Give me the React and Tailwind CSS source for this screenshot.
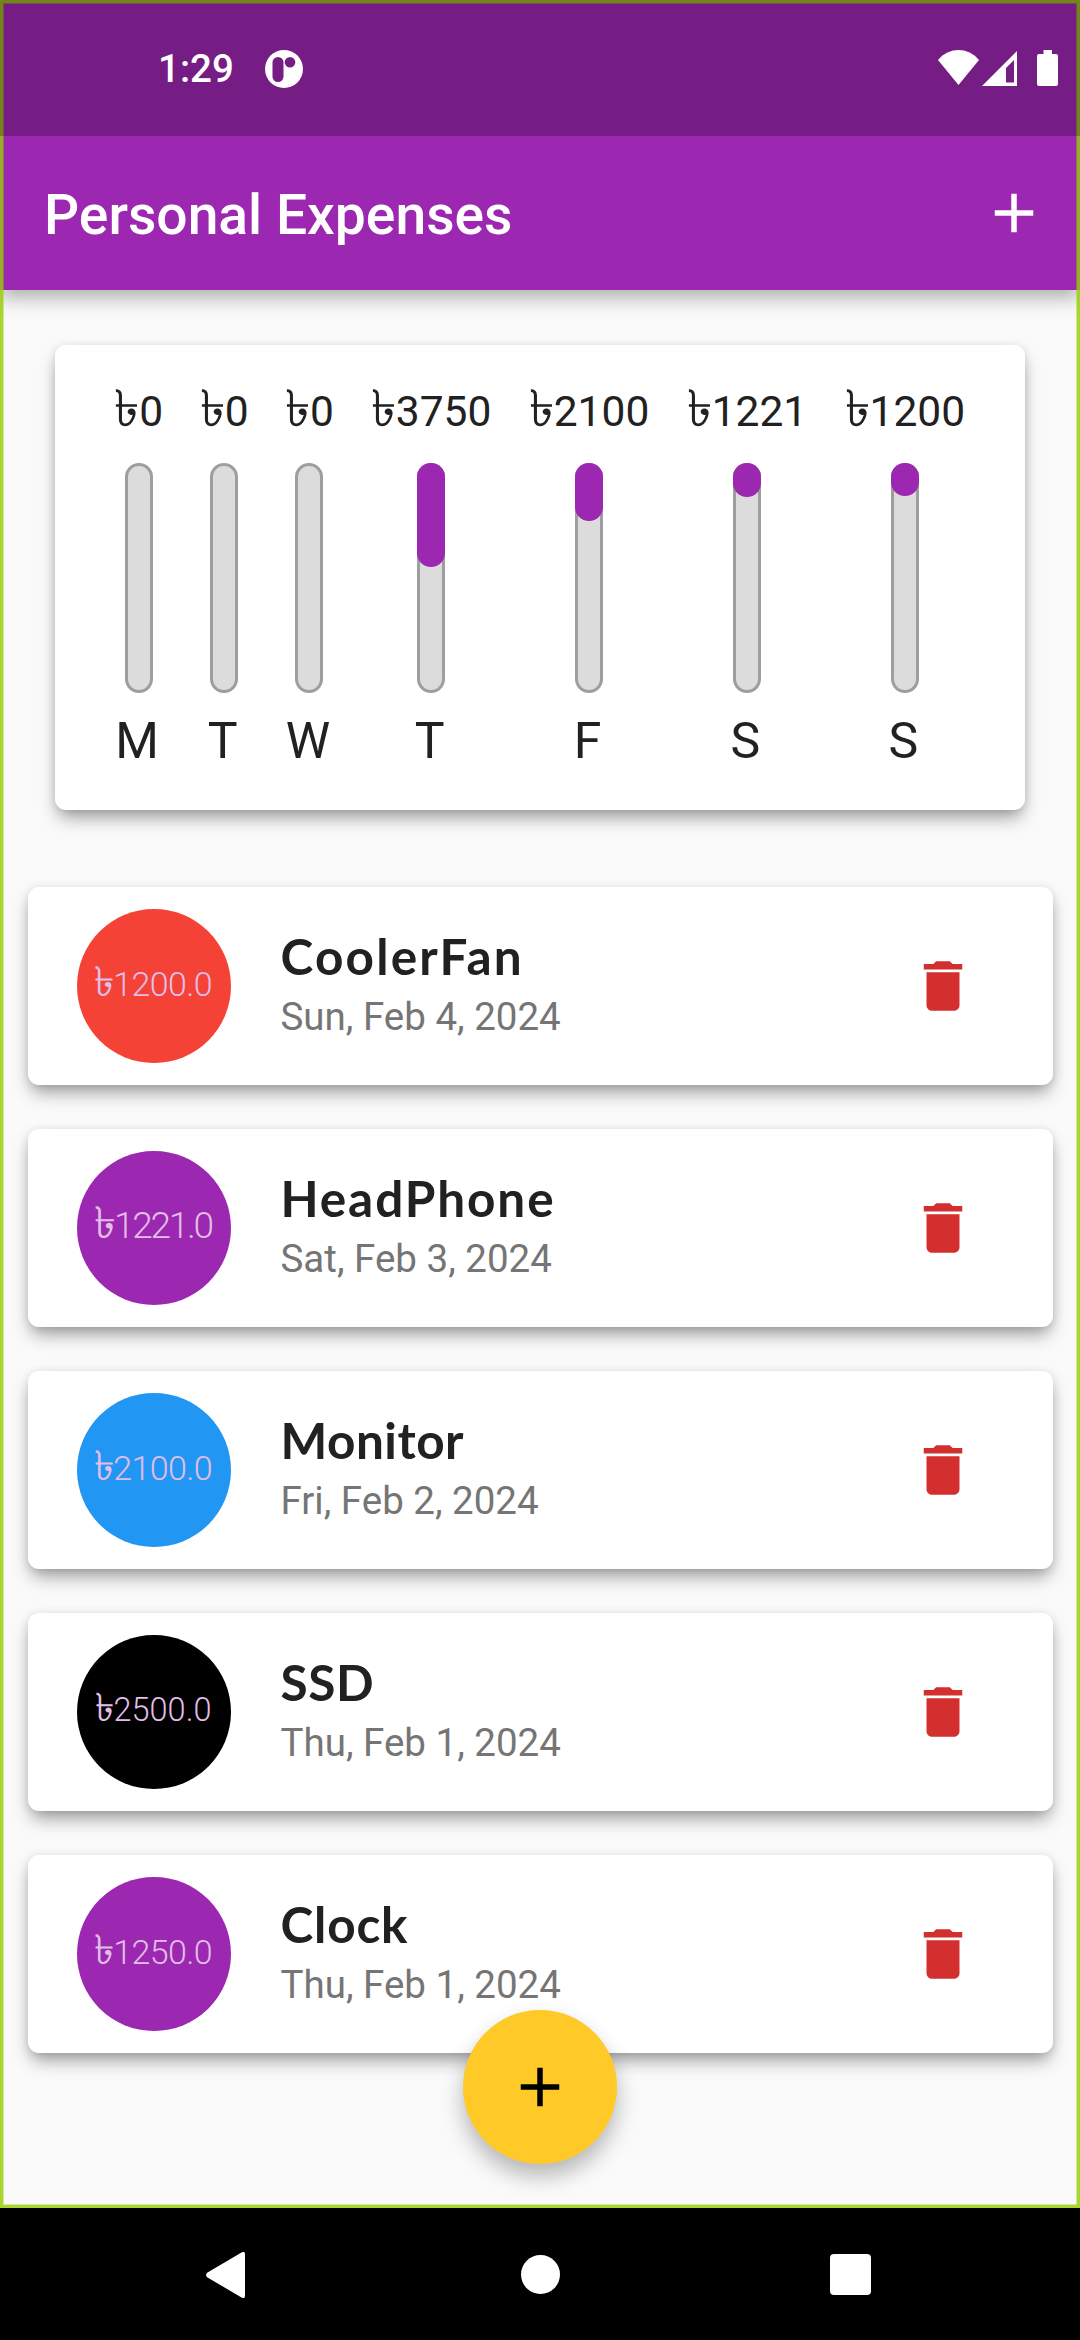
import React from "react";

const days = [
  { amount: 0, day: "M", fill: 0 },
  { amount: 0, day: "T", fill: 0 },
  { amount: 0, day: "W", fill: 0 },
  { amount: 3750, day: "T", fill: 104.3 },
  { amount: 2100, day: "F", fill: 58.3 },
  { amount: 1221, day: "S", fill: 34 },
  { amount: 1200, day: "S", fill: 33.3 },
];

const expenses = [
  { title: "CoolerFan", date: "Sun, Feb 4, 2024", amount: "1200.0", color: "bg-[#f44336]", size: "text-[34px] tracking-[-0.6px]", spacing: "tracking-[2.2px]" },
  { title: "HeadPhone", date: "Sat, Feb 3, 2024", amount: "1221.0", color: "bg-[#9c27b0]", size: "text-[37px] tracking-[-2.3px]", spacing: "tracking-[1.9px]" },
  { title: "Monitor", date: "Fri, Feb 2, 2024", amount: "2100.0", color: "bg-[#2196f3]", size: "text-[34px] tracking-[-0.6px]", spacing: "tracking-[0.5px]" },
  { title: "SSD", date: "Thu, Feb 1, 2024", amount: "2500.0", color: "bg-black", size: "text-[32.5px] tracking-[0px]", spacing: "tracking-[0.6px]" },
  { title: "Clock", date: "Thu, Feb 1, 2024", amount: "1250.0", color: "bg-[#9c27b0]", size: "text-[34px] tracking-[-0.6px]", spacing: "tracking-[0.8px]" },
];

const cardShadow = "shadow-[0_10px_18px_-3px_rgba(0,0,0,0.38),0_1px_10px_rgba(0,0,0,0.1)]";

function Taka() {
  return <span className="text-[1.2em] font-normal leading-none">৳</span>;
}

function Plus({ className }) {
  return (
    <svg viewBox="0 0 24 24" className={"size-[66px] fill-current " + className}>
      <path d="M19 13h-6v6h-2v-6H5v-2h6V5h2v6h6z" />
    </svg>
  );
}

function StatusBar() {
  return (
    <div className="flex h-[136px] items-center bg-[#751d84] pl-[158px] pr-[22px] text-white">
      <span className="pt-[3px] text-[38.5px] font-medium leading-none">1:29</span>
      <svg viewBox="0 0 38 38" className="ml-[31px] mt-[1px] size-[38px]">
        <circle cx="19" cy="19" r="19" fill="white" />
        <rect x="7.5" y="7" width="11" height="25" rx="5.500" fill="#751d84" />
        <circle cx="25" cy="12.2" r="5.3" fill="#751d84" />
      </svg>
      <svg viewBox="0 0 41 35" className="ml-auto mb-[1px] h-[35px] w-[41px] fill-white">
        <path d="M0 10C11-3.3 30-3.3 41 10L20.500 35z" />
      </svg>
      <svg viewBox="0 0 35 35" className="ml-[3px] h-[35px] w-[35px] fill-white">
        <path fillRule="evenodd" d="M35 0V35H0zM32 9L24 17V31.500H32z" />
      </svg>
      <svg viewBox="0 0 21 36" className="ml-5 h-9 w-[21px] fill-white">
        <path d="M6.500 0h8.500v4h4q2 0 2 2v28q0 2-2 2H2q-2 0-2-2V6q0-2 2-2h4.500z" />
      </svg>
    </div>
  );
}

function Chart() {
  return (
    <section className={"mx-[55px] mt-[55px] flex h-[465px] rounded-[11px] bg-white px-[41px] pt-[38px] text-[#212121] " + cardShadow}>
      {days.map((d, i) => (
        <div key={i} className={"flex flex-col items-center " + (d.amount ? "w-[157.9px]" : "w-[85.4px]")}>
          <div className="h-[46px] whitespace-nowrap text-[42.5px] leading-[46px]">
            <Taka />
            {d.amount}
          </div>
          <div className="mt-[34px] h-[230px] w-[28px] rounded-full border-3 border-[#9e9e9e] bg-[#dcdcdc]">
            {d.fill > 0 && (
              <div className="-m-[3px] rounded-full bg-[#9c27b0]" style={{ height: d.fill }} />
            )}
          </div>
          <div className="mt-[19px] pr-[3px] text-[50px] leading-[58px]">{d.day}</div>
        </div>
      ))}
    </section>
  );
}

function ExpenseCard({ item }) {
  return (
    <article className={"flex h-[198px] items-center rounded-[11px] bg-white pl-[49.500px] pr-[77px] " + cardShadow}>
      <div className={"flex size-[154px] shrink-0 items-center justify-center rounded-full " + item.color}>
        <span className={"whitespace-nowrap pb-1 pr-[2px] font-light text-[#e1bee7] " + item.size}>
          <Taka />
          {item.amount}
        </span>
      </div>
      <div className="ml-[49.500px] flex flex-col">
        <h2 className={"-mt-[4px] mb-[3px] font-['Lato'] text-[49.5px] font-bold leading-[62px] text-[#212121] " + item.spacing}>{item.title}</h2>
        <p className="text-[38.5px] leading-[54px] text-[#757575]">{item.date}</p>
      </div>
      <svg viewBox="0 0 24 24" className="ml-auto size-[66px] fill-[#d32f2f]">
        <path d="M6 19c0 1.100.9 2 2 2h8c1.100 0 2-.9 2-2V7H6v12zM19 4h-3.500l-1-1h-5l-1 1H5v2h14V4z" />
      </svg>
    </article>
  );
}

function NavBar() {
  return (
    <nav className="flex h-[132px] items-center bg-black pl-[206px] pr-[209px] pt-[1px]">
      <svg viewBox="0 0 39 46" className="h-[46px] w-[39px] fill-white">
        <path d="M35.500.6Q39-1.500 39 2.500V43.500Q39 47.500 35.500 45.400L1.500 25.500Q-1.500 23 1.500 20.500z" />
      </svg>
      <div className="ml-[276px] size-[39px] rounded-full bg-white" />
      <div className="ml-auto size-[41px] rounded-[4px] bg-white" />
    </nav>
  );
}

export default function App() {
  return (
    <div className="flex h-[2340px] w-[1080px] flex-col overflow-hidden bg-[#fafafa] font-['Roboto','Noto_Sans',sans-serif]">
      <div className="relative flex h-[2208px] flex-col">
        <header className="shadow-[0_8px_18px_rgba(0,0,0,0.3)]">
          <StatusBar />
          <div className="flex h-[154px] items-center justify-between bg-[#9c27b0] pl-[44px] pr-[33px] text-white">
            <h1 className="pt-[4px] text-[55.2px] font-medium">Personal Expenses</h1>
            <Plus className="text-white" />
          </div>
        </header>
        <Chart />
        <main className="mx-[27.500px] mt-[77px] flex flex-col gap-[44px]">
          {expenses.map((item) => (
            <ExpenseCard key={item.title} item={item} />
          ))}
        </main>
        <button className="absolute bottom-[44px] left-[463px] flex size-[154px] items-center justify-center rounded-full bg-[#ffca28] shadow-[0_12px_22px_rgba(0,0,0,0.28)]">
          <Plus className="text-black" />
        </button>
        <div className="pointer-events-none absolute inset-x-0 bottom-0 top-[136px] border-x-3 border-b-3 border-[#96ce00]/82 shadow-[inset_1px_-1px_0_rgba(150,206,0,0.4),inset_-1px_0_0_rgba(150,206,0,0.4)]" />
        <div className="pointer-events-none absolute inset-x-0 top-0 h-[136px] border-x-3 border-t-3 border-[#748419] shadow-[inset_1px_1px_0_rgba(116,132,25,0.5),inset_-1px_0_0_rgba(116,132,25,0.5)]" />
      </div>
      <NavBar />
    </div>
  );
}
